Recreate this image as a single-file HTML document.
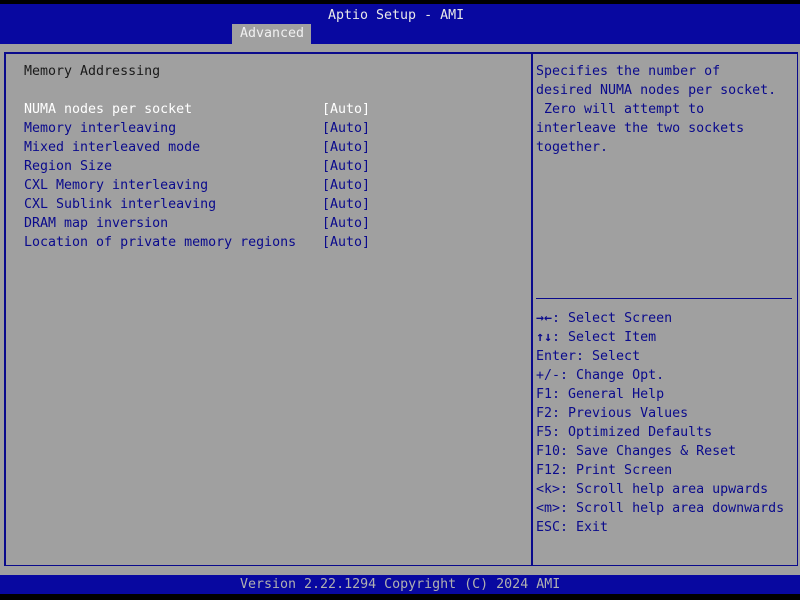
<!DOCTYPE html>
<html><head><meta charset="utf-8"><style>
*{margin:0;padding:0;box-sizing:border-box}
body{width:800px;height:600px;background:#000;position:relative;overflow:hidden;font-family:"DejaVu Sans Mono","Liberation Mono",monospace;font-size:13.3px;color:#0a0a8c}
.a{position:absolute;white-space:pre;line-height:19px}
#top{position:absolute;left:0;top:4px;width:800px;height:40px;background:#0808a0}
#body{position:absolute;left:0;top:44px;width:800px;height:531px;background:#a0a0a0}
#bot{position:absolute;left:0;top:575px;width:800px;height:19px;background:#0808a0}
#frame{position:absolute;left:4px;top:52px;width:794px;height:514px;border:2px solid #0a0a8c;border-width:2px 1px 1px 2px}
#div{position:absolute;left:531px;top:53px;width:2px;height:512px;background:#0a0a8c}
#hl{position:absolute;left:536px;top:298px;width:256px;height:1px;background:#0a0a8c}
#tab{position:absolute;left:232px;top:24px;width:79px;height:20px;background:#a0a0a0}
</style></head><body>
<div id="top"></div><div id="tab"></div>
<div id="body"></div><div id="bot"></div>
<div id="frame"></div><div id="div"></div><div id="hl"></div>
<div class="a" style="left:328px;top:6px;color:#e8e8e8">Aptio Setup - AMI</div>
<div class="a" style="left:240px;top:24px;color:#f0f0f0">Advanced</div>
<div class="a" style="left:24px;top:62px;color:#1a1a1a">Memory Addressing</div>
<div class="a" style="left:24px;top:100px"><span style="color:#fff">NUMA nodes per socket</span>
Memory interleaving
Mixed interleaved mode
Region Size
CXL Memory interleaving
CXL Sublink interleaving
DRAM map inversion
Location of private memory regions</div>
<div class="a" style="left:322px;top:100px"><span style="color:#fff">[Auto]</span>
[Auto]
[Auto]
[Auto]
[Auto]
[Auto]
[Auto]
[Auto]</div>
<div class="a" style="left:536px;top:62px">Specifies the number of
desired NUMA nodes per socket.
 Zero will attempt to
interleave the two sockets
together.</div>
<div class="a" style="left:536px;top:309px"><b>→←</b>: Select Screen
<b>↑↓</b>: Select Item
Enter: Select
+/-: Change Opt.
F1: General Help
F2: Previous Values
F5: Optimized Defaults
F10: Save Changes &amp; Reset
F12: Print Screen
&lt;k&gt;: Scroll help area upwards
&lt;m&gt;: Scroll help area downwards
ESC: Exit</div>
<div class="a" style="left:240px;top:575px;line-height:19px;color:#b0b0b0">Version 2.22.1294 Copyright (C) 2024 AMI</div>
</body></html>
